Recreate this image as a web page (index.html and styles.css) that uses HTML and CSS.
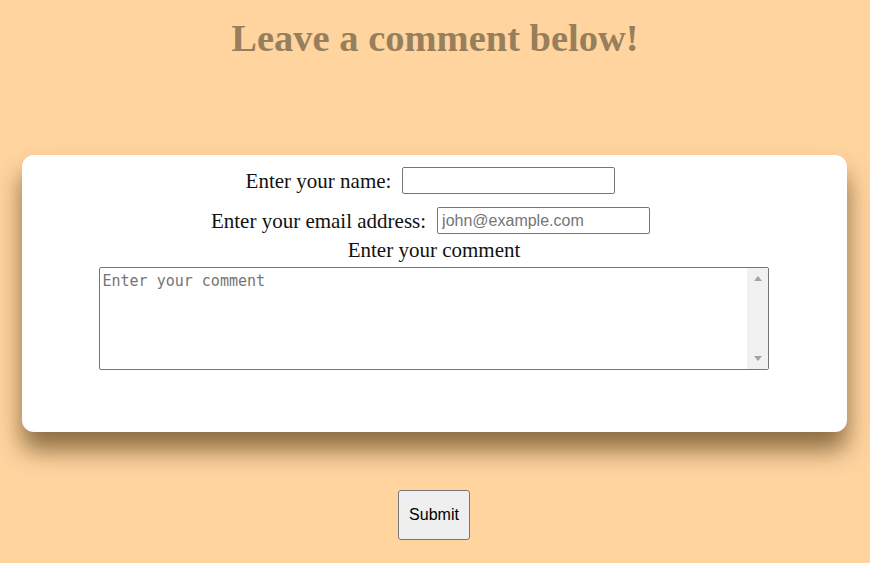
FILE: index.html
```html
<!DOCTYPE html>
<html>
<head>
<meta charset="utf-8">
<link rel="stylesheet" href="styles.css">
</head>
<body>
<h1 class="title">Leave a comment below!</h1>
<form class="form">
  <div class="card">
    <div class="row">
      <label class="label" for="name">Enter your name:</label>
      <input class="field" id="name" type="text">
    </div>
    <div class="row">
      <label class="label" for="email">Enter your email address:</label>
      <input class="field" id="email" type="email" placeholder="john@example.com">
    </div>
    <label class="label comment-label" for="comment">Enter your comment</label>
    <div class="comment-wrap">
      <textarea class="comment" id="comment" placeholder="Enter your comment"></textarea>
      <div class="scrollbar" aria-hidden="true">
        <span class="arrow arrow-up"></span>
        <span class="arrow arrow-down"></span>
      </div>
    </div>
  </div>
  <button class="submit" type="button">Submit</button>
</form>
</body>
</html>
```
FILE: styles.css
```css
html, body {
  margin: 0;
  padding: 0;
}
body {
  background: #ffd49f;
  font-family: "Liberation Serif", serif;
  color: #111;
  overflow: hidden;
}
.title {
  margin: 16px 0 0;
  text-align: center;
  font-size: 38.5px;
  font-weight: bold;
  line-height: 44px;
  color: #987f5c;
}
.form {
  display: flex;
  flex-direction: column;
  align-items: center;
}
.card {
  margin-top: 95px;
  width: 825px;
  box-sizing: border-box;
  margin-left: -1px;
  background: #fff;
  border-radius: 12px;
  box-shadow: 0 18px 25px rgba(70, 45, 10, 0.62);
  padding: 12px 0 62px;
  display: flex;
  flex-direction: column;
  align-items: center;
}
.row {
  display: flex;
  align-items: center;
  gap: 11px;
  margin-bottom: 13px;
  padding-right: 8px;
}
.row:nth-child(2) {
  margin-bottom: 6px;
}
.label {
  font-size: 21px;
  line-height: 20px;
}
.field {
  width: 213px;
  height: 27px;
  box-sizing: border-box;
  border: 1px solid #767676;
  border-radius: 2px;
  padding: 1px 4px;
  font-family: "Liberation Sans", Arial, sans-serif;
  font-size: 16px;
  color: #000;
}
.field::placeholder {
  color: #757575;
}
.comment-label {
  margin-bottom: 7px;
  padding-right: 1px;
}
.comment-wrap {
  position: relative;
  width: 670px;
  height: 103px;
  margin-right: 2px;
}
.comment {
  display: block;
  width: 100%;
  height: 100%;
  box-sizing: border-box;
  border: 1px solid #767676;
  border-radius: 2px;
  padding: 4px 24px 2px 3px;
  resize: none;
  overflow: hidden;
  font-family: "DejaVu Sans Mono", monospace;
  font-size: 15px;
  line-height: 18px;
  margin: 0;
}
.comment::placeholder {
  color: #757575;
}
.scrollbar {
  position: absolute;
  top: 1px;
  right: 1px;
  bottom: 1px;
  width: 21px;
  background: #f1f1f1;
}
.arrow {
  position: absolute;
  left: 7px;
  width: 0;
  height: 0;
  border-left: 4px solid transparent;
  border-right: 4px solid transparent;
}
.arrow-up {
  top: 8px;
  border-bottom: 5px solid #a3a3a3;
}
.arrow-down {
  bottom: 8px;
  border-top: 5px solid #a3a3a3;
}
.submit {
  margin-top: 58px;
  margin-right: 2px;
  width: 72px;
  height: 50px;
  background: #efefef;
  border: 1px solid #767676;
  border-radius: 3px;
  font-family: "Liberation Sans", Arial, sans-serif;
  font-size: 16px;
  color: #000;
  padding: 0;
}
```
